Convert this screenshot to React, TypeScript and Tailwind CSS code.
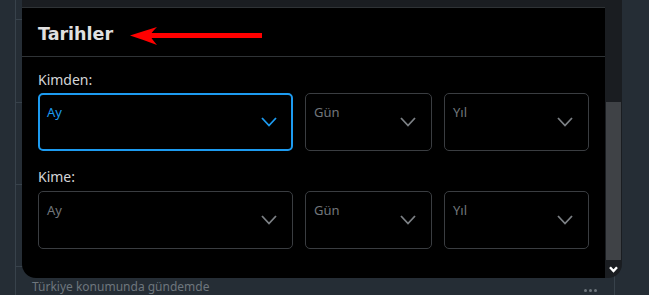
import { ReactNode } from "react";

function Chevron({ blue }: { blue?: boolean }) {
  return (
    <svg width="16" height="10" viewBox="0 0 16 10" className="shrink-0 self-center">
      <polyline
        points="1,1 8,8.5 15,1"
        fill="none"
        stroke={blue ? "#1d9bf0" : "#7c8085"}
        strokeWidth="1.8"
      />
    </svg>
  );
}

function Select({ label, w, focused }: { label: string; w: string; focused?: boolean }) {
  return (
    <div
      className={
        focused
          ? `${w} flex h-[58px] justify-between rounded-[5px] border-2 border-[#1d9bf0] pl-[7px] pr-[14px]`
          : `${w} flex h-[58px] justify-between rounded-[5px] border border-[#3a3d41] pl-[8px] pr-[15px]`
      }
    >
      <span
        className={
          focused
            ? "pt-[9px] text-[13px] leading-[16px] text-[#1d9bf0]"
            : "pt-[10px] text-[13px] leading-[16px] text-[#71767b]"
        }
      >
        {label}
      </span>
      <Chevron blue={focused} />
    </div>
  );
}

function Row({ children }: { children: ReactNode }) {
  return <div className="flex gap-3">{children}</div>;
}

export default function App() {
  return (
    <div
      className="relative h-[295px] w-[649px] overflow-hidden bg-[#252d35]"
      style={{ fontFamily: '"Noto Sans", "Open Sans", sans-serif' }}
    >
      {/* trend list behind the dialog */}
      <div className="ml-[15px] flex h-full w-[600px] flex-col border-x border-[#38424b]">
        <div className="h-[20px] border-b border-[#38424b]" />
        <div className="h-[84px] border-b border-[#38424b]" />
        <div className="h-[82px] border-b border-[#38424b]" />
        <div className="h-[83px] border-b border-[#38424b]" />
        <div className="flex items-start justify-between pl-4 pr-[17px] pt-[12px]">
          <span className="text-[12px] leading-[16px] text-[#6e767d]">Türkiye konumunda gündemde</span>
          <span className="flex gap-[2px] pt-[10px]">
            <span className="h-[3px] w-[3px] rounded-full bg-[#6e767d]" />
            <span className="h-[3px] w-[3px] rounded-full bg-[#6e767d]" />
            <span className="h-[3px] w-[3px] rounded-full bg-[#6e767d]" />
          </span>
        </div>
      </div>

      {/* dialog */}
      <div className="absolute left-[22px] top-0 flex h-[278px] w-[600px] overflow-hidden rounded-b-[14px]">
        <div className="relative flex w-[583px] flex-col bg-black">
          <div className="h-[8px] border-b border-[#2f3336] bg-[#1a1d21]" />
          <div className="flex h-[49px] items-center border-b border-[#2f3336] px-4 pt-[5px]">
            <span
              className="text-[17.5px] font-bold leading-[21px] text-[#e0e0e0]"
              style={{ fontFamily: '"DejaVu Sans", sans-serif' }}
            >
              Tarihler
            </span>
          </div>
          <svg width="140" height="24" viewBox="0 0 140 24" className="absolute left-[104px] top-[23px]">
            <path d="M4,12.5 Q18,8 31,4 Q25,10 24,12.5 Q25,15 31,22 Q18,17 4,12.5 Z" fill="#ff0000" />
            <rect x="22" y="10" width="114" height="5" fill="#ff0000" />
          </svg>

          <div className="flex flex-col px-4 pt-[13px]">
            <div className="mb-[3px] text-[14px] leading-[20px] text-[#d4d6d8]">Kimden:</div>
            <Row>
              <Select label="Ay" w="w-[255px]" focused />
              <Select label="Gün" w="w-[127px]" />
              <Select label="Yıl" w="w-[145px]" />
            </Row>
            <div className="mb-[4px] mt-[16px] text-[14px] leading-[20px] text-[#d4d6d8]">Kime:</div>
            <Row>
              <Select label="Ay" w="w-[255px]" />
              <Select label="Gün" w="w-[127px]" />
              <Select label="Yıl" w="w-[145px]" />
            </Row>
          </div>
        </div>

        {/* scrollbar */}
        <div className="flex w-[17px] flex-col bg-[#1a1d21]">
          <div className="h-[102px]" />
          <div className="mx-px h-[158px] bg-[#3f4246]" />
          <div className="flex flex-1 items-center justify-center">
            <svg width="9" height="7" viewBox="0 0 9 7">
              <polyline points="1,1.2 4.5,5 8,1.2" fill="none" stroke="#ffffff" strokeWidth="2.4" />
            </svg>
          </div>
        </div>
      </div>
    </div>
  );
}
